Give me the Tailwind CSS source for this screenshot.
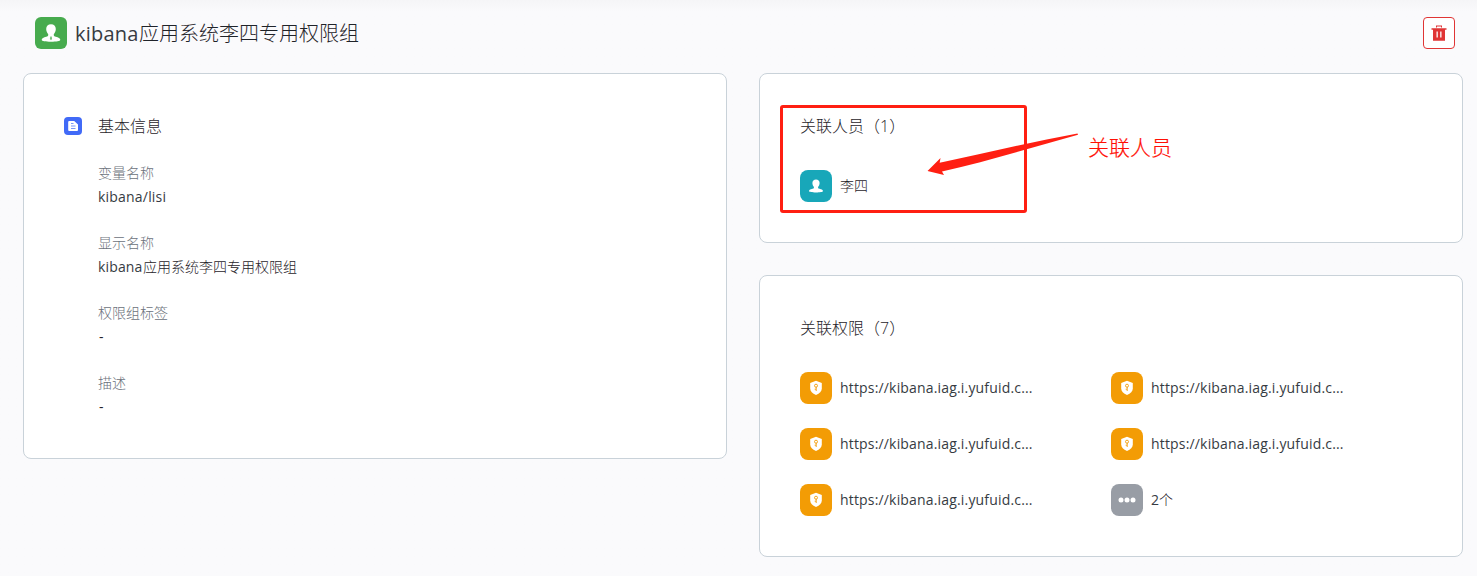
<!DOCTYPE html>
<html lang="zh-CN">
<head>
<meta charset="utf-8">
<title>kibana应用系统李四专用权限组</title>
<script src="https://cdn.jsdelivr.net/npm/@tailwindcss/browser@4"></script>
</head>
<body class="relative h-[576px] w-[1477px] overflow-hidden bg-[#fafafc] font-['Open_Sans','Noto_Sans_CJK_SC',sans-serif] text-sm font-light text-[#1f2329]">
<svg class="hidden">
  <symbol id="person" viewBox="0 0 32 32"><path fill="#fff" d="M16 7.300c-2.900 0-4.800 1.900-4.800 4.700 0 2 .8 3.900 2 5.200.3 1.500-.5 2.100-2.100 2.600-2.300.7-4.400 1.400-4.400 3 0 1.400 3.900 1.900 9.300 1.900s9.300-.5 9.300-1.900c0-1.600-2.100-2.300-4.400-3-1.600-.5-2.400-1.100-2.100-2.600 1.200-1.300 2-3.200 2-5.200 0-2.800-1.900-4.700-4.800-4.700z"/></symbol>
  <symbol id="shield" viewBox="0 0 32 32"><path fill="#fff" d="M16 8.800l5.800 2.200v5.500c0 3-2.200 5-5.800 6.500-3.600-1.500-5.800-3.500-5.800-6.500V11z"/><circle cx="16" cy="13.700" r="1.500" fill="none" stroke="#f39c05" stroke-width=".9"/><path d="M16.200 15v4M16 17.200h-1.300" fill="none" stroke="#f39c05" stroke-width=".9"/></symbol>
</svg>
<div class="flex h-full flex-col bg-linear-to-b from-[#f5f5f7] to-[#fafafc] to-[12px]">
  <header class="flex h-[73px] shrink-0 items-start pt-[17px] pr-[22px] pl-[35px]">
    <div class="size-8 rounded-md bg-[#47ab4e]"><svg class="size-8" viewBox="0 0 32 32"><use href="#person"/><path fill="#47ab4e" d="M15.300 19.500h1.400l.4 2.600-1.100 1.200-1.100-1.200z" opacity=".75"/></svg></div>
    <h1 class="ml-2 flex h-[34px] items-center text-xl whitespace-nowrap"><span class="w-16 font-normal tracking-[0.2px] text-[#363b42]">kibana</span>应用系统李四专用权限组</h1>
    <button class="ml-auto size-8 rounded border border-[#e03535] bg-white" aria-label="删除">
      <svg class="size-[30px]" viewBox="0 0 30 30"><path fill="#e03535" fill-rule="evenodd" d="M12 7.500h6v2h-1v-1h-4v1h-1zM7.500 10.300h15v1.500H21v11H9v-11H7.500zM12.500 13.500v6h1.300v-6zM16.200 13.500v6h1.300v-6z"/></svg>
    </button>
  </header>
  <main class="flex items-start gap-8 pl-[23px]">
    <section class="flex h-[386px] w-[704px] rounded-lg border border-[#c9d2d9] bg-white pt-[41px] pl-10">
      <svg class="mt-[2px] size-[18px]" viewBox="0 0 18 18"><rect width="18" height="18" rx="4" fill="#416af7"/><path fill="#fff" d="M5.200 4h5l3.800 3.500V13a1 1 0 0 1-1 1H5.200a1 1 0 0 1-1-1V5a1 1 0 0 1 1-1z"/><path d="M7 6.500h2.500M7 9h4.500M7 11.500h4.500" stroke="#416af7" stroke-width=".7"/></svg>
      <div class="ml-4">
        <h2 class="h-[46px] text-base leading-[22px]">基本信息</h2>
        <dl class="leading-6">
          <dt class="h-6 text-[#6b717b]">变量名称</dt><dd class="h-[46px] font-normal tracking-[0.2px] text-[#363b42]">kibana/lisi</dd>
          <dt class="h-6 text-[#6b717b]">显示名称</dt><dd class="flex h-[46px]"><span class="w-[45px] font-normal tracking-[0.150px] text-[#363b42]">kibana</span>应用系统李四专用权限组</dd>
          <dt class="h-6 text-[#6b717b]">权限组标签</dt><dd class="h-[46px] pl-px font-normal">-</dd>
          <dt class="h-6 text-[#6b717b]">描述</dt><dd class="pl-px font-normal">-</dd>
        </dl>
      </div>
    </section>
    <div class="flex flex-col gap-8">
      <section class="h-[170px] w-[704px] rounded-lg border border-[#c9d2d9] bg-white pt-[41px] pl-10">
        <h2 class="h-[55px] text-base leading-[23px]">关联人员（1）</h2>
        <div class="flex items-center gap-2"><div class="flex size-8 items-center justify-center rounded-lg bg-[#18a7b9]"><svg class="size-6"><use href="#person"/></svg></div>李四</div>
      </section>
      <section class="h-[282px] w-[704px] rounded-lg border border-[#c9d2d9] bg-white pt-[41px] pl-10">
        <h2 class="h-[55px] text-base leading-[23px]">关联权限（7）</h2>
        <div class="grid grid-cols-[311px_311px] gap-y-6">
          <div class="flex items-center gap-2"><div class="size-8 rounded-lg bg-[#f39c05]"><svg class="size-8"><use href="#shield"/></svg></div><span class="font-normal tracking-[0.170px] text-[#363b42]">https://kibana.iag.i.yufuid.c...</span></div>
          <div class="flex items-center gap-2"><div class="size-8 rounded-lg bg-[#f39c05]"><svg class="size-8"><use href="#shield"/></svg></div><span class="font-normal tracking-[0.170px] text-[#363b42]">https://kibana.iag.i.yufuid.c...</span></div>
          <div class="flex items-center gap-2"><div class="size-8 rounded-lg bg-[#f39c05]"><svg class="size-8"><use href="#shield"/></svg></div><span class="font-normal tracking-[0.170px] text-[#363b42]">https://kibana.iag.i.yufuid.c...</span></div>
          <div class="flex items-center gap-2"><div class="size-8 rounded-lg bg-[#f39c05]"><svg class="size-8"><use href="#shield"/></svg></div><span class="font-normal tracking-[0.170px] text-[#363b42]">https://kibana.iag.i.yufuid.c...</span></div>
          <div class="flex items-center gap-2"><div class="size-8 rounded-lg bg-[#f39c05]"><svg class="size-8"><use href="#shield"/></svg></div><span class="font-normal tracking-[0.170px] text-[#363b42]">https://kibana.iag.i.yufuid.c...</span></div>
          <div class="flex items-center gap-2"><div class="size-8 rounded-lg bg-[#989da5]"><svg class="size-8" viewBox="0 0 32 32" fill="#fff"><circle cx="10" cy="16" r="2.500"/><circle cx="16" cy="16" r="2.500"/><circle cx="22" cy="16" r="2.500"/></svg></div><span><b class="font-normal text-[#363b42]">2</b>个</span></div>
        </div>
      </section>
    </div>
  </main>
</div>
<!-- Annotation overlay -->
<div class="absolute top-[105px] left-[780px] h-[108px] w-[247px] rounded-[3px] border-3 border-[#ff1f12]"></div>
<svg class="absolute top-[130px] left-[920px] h-[50px] w-[165px]" viewBox="920 130 165 50"><path fill="#ff1f12" d="M927.500 171l13-13-.8 4.800C985 153 1031 142 1077.500 133.500l.5 1.200C1033 147 988 161 942 171.500l2 3.500z"/></svg>
<div class="absolute top-[131px] left-[1088px] text-[21px] leading-8 whitespace-nowrap text-[#ff0f05] [-webkit-text-stroke:0.2px_#ff0f05]">关联人员</div>
</body>
</html>
